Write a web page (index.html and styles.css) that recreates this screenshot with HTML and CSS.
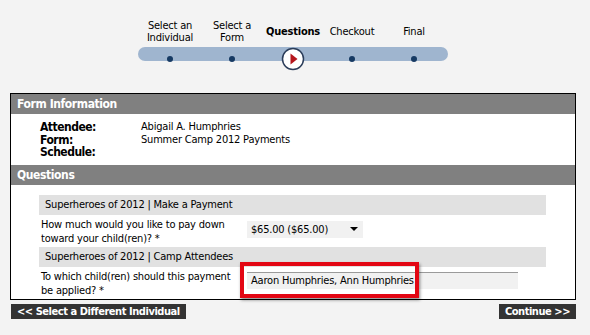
FILE: index.html
```html
<!DOCTYPE html>
<html lang="en">
<head>
    <meta charset="UTF-8">
    <title>Registration - Questions</title>
    <link rel="stylesheet" href="styles.css">
</head>
<body>
    <div class="steps">
        <div class="step-labels">
            <div class="step-label">Select an<br>Individual</div>
            <div class="step-label">Select a<br>Form</div>
            <div class="step-label current">Questions</div>
            <div class="step-label">Checkout</div>
            <div class="step-label">Final</div>
        </div>
        <div class="step-track">
            <div class="step-slot"><span class="dot"></span></div>
            <div class="step-slot"><span class="dot"></span></div>
            <div class="step-slot">
                <svg class="current-mark" width="24" height="24" viewBox="0 0 24 24">
                    <circle cx="12" cy="12" r="10.5" fill="#fff" stroke="#2b3d5a" stroke-width="1.5"/>
                    <path d="M9.5 6.5 L16.5 12 L9.5 17.5 Z" fill="#b5171d"/>
                </svg>
            </div>
            <div class="step-slot"><span class="dot"></span></div>
            <div class="step-slot"><span class="dot"></span></div>
        </div>
    </div>

    <div class="panel">
        <div class="panel-head">Form Information</div>
        <div class="info">
            <div class="info-label">Attendee:</div>
            <div class="info-value">Abigail A. Humphries</div>
            <div class="info-label">Form:</div>
            <div class="info-value">Summer Camp 2012 Payments</div>
            <div class="info-label">Schedule:</div>
            <div class="info-value"></div>
        </div>
        <div class="panel-head">Questions</div>
        <div class="questions">
            <div class="q-group">Superheroes of 2012 | Make a Payment</div>
            <div class="q-row">
                <div class="q-text">How much would you like to pay down toward your child(ren)? *</div>
                <div class="q-field">
                    <div class="select-box">
                        <span>$65.00 ($65.00)</span>
                        <span class="caret"></span>
                    </div>
                </div>
            </div>
            <div class="q-group">Superheroes of 2012 | Camp Attendees</div>
            <div class="q-row">
                <div class="q-text">To which child(ren) should this payment be applied? *</div>
                <div class="q-field">
                    <div class="text-box">
                        Aaron Humphries, Ann Humphries
                        <div class="highlight"></div>
                    </div>
                </div>
            </div>
        </div>
    </div>

    <div class="actions">
        <a class="btn" href="#">&lt;&lt; Select a Different Individual</a>
        <a class="btn" href="#">Continue &gt;&gt;</a>
    </div>
</body>
</html>
```

FILE: styles.css
```css
body {
    margin: 0;
    background-color: #f3f3f3;
    font-family: "DejaVu Sans Condensed", "DejaVu Sans", sans-serif;
    font-stretch: condensed;
    font-size: 11px;
    letter-spacing: -0.2px;
    color: #000;
}
.steps {
    width: 310px;
    margin: 18px 0 0 138px;
}
.step-labels,
.step-track {
    display: grid;
    grid-template-columns: 64px 60px 62px 56px 68px;
}
.step-labels {
    height: 27px;
}
.step-label {
    display: flex;
    align-items: center;
    justify-content: center;
    text-align: center;
    line-height: 12px;
}
.step-label.current {
    font-weight: bold;
}
.step-track {
    height: 14px;
    margin-top: 2px;
    background-color: #9fb5cf;
    border-radius: 7px;
}
.step-slot {
    display: flex;
    align-items: center;
    justify-content: center;
}
.dot {
    width: 6px;
    height: 6px;
    border-radius: 50%;
    background-color: #163a63;
}
.current-mark {
    display: block;
}
.panel {
    width: 564px;
    margin: 32px 0 0 10px;
    border: 1px solid #000;
    background-color: #fff;
}
.panel-head {
    height: 20px;
    line-height: 20px;
    padding-left: 6px;
    background-color: #808080;
    color: #fff;
    font-weight: bold;
    font-size: 12px;
    letter-spacing: -0.4px;
}
.info {
    display: grid;
    grid-template-columns: 101px 1fr;
    padding: 7px 0 6px 29px;
    line-height: 12.5px;
}
.info-label {
    font-weight: bold;
    font-size: 12px;
    letter-spacing: -0.5px;
}
.questions {
    width: 507px;
    padding: 10px 0 0 28px;
}
.q-group {
    height: 20px;
    line-height: 20px;
    padding-left: 6px;
    background-color: #e1e1e1;
}
.q-row {
    display: flex;
    height: 32px;
}
.q-text {
    width: 192px;
    padding: 3px 14px 0 2px;
    line-height: 14px;
}
.q-field {
    padding-top: 6px;
}
.select-box {
    display: flex;
    align-items: center;
    justify-content: space-between;
    width: 107px;
    height: 17px;
    padding: 0 5px 0 4px;
    background-color: #f1f1f1;
}
.caret {
    width: 0;
    height: 0;
    border-left: 4px solid transparent;
    border-right: 4px solid transparent;
    border-top: 4px solid #000;
}
.text-box {
    position: relative;
    width: 267px;
    height: 16px;
    line-height: 16px;
    margin-top: -1px;
    padding-left: 4px;
    border-top: 1px solid #9a9a9a;
    background-color: #f1f1f1;
}
.highlight {
    position: absolute;
    left: -7px;
    top: -11px;
    width: 171px;
    height: 28px;
    border: 4px solid #e30613;
    box-shadow: 1px 2px 3px rgba(0, 0, 0, 0.45);
}
.actions {
    display: flex;
    justify-content: space-between;
    width: 565px;
    margin: 4px 0 0 11px;
}
.btn {
    display: block;
    height: 15px;
    line-height: 15px;
    padding: 0 6px;
    background-color: #333;
    color: #fff;
    font-weight: bold;
    font-size: 11px;
    letter-spacing: -0.45px;
    text-decoration: none;
}
```
